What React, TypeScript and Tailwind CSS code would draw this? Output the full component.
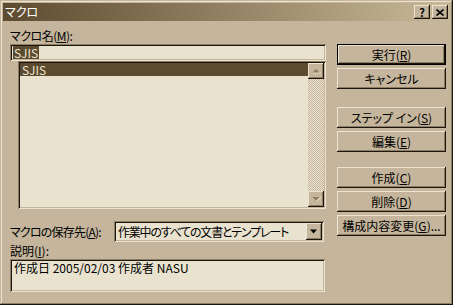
import React from 'react';

const RAISED =
  'shadow-[inset_-1px_-1px_#1c150c,inset_1px_1px_#ebe4d1,inset_-2px_-2px_#8c7d64,inset_2px_2px_#c4b59c]';
const SUNKEN =
  'shadow-[inset_1px_1px_#8c7d64,inset_-1px_-1px_#ebe4d1,inset_2px_2px_#1c150c,inset_-2px_-2px_#c4b59c]';

function Key({ k }: { k: string }) {
  return <span className="underline underline-offset-[1px]">{k}</span>;
}

function Button({ children, primary }: { children: React.ReactNode; primary?: boolean }) {
  return (
    <div
      className={`w-[109px] h-[21px] flex items-center justify-center bg-[#c4b59c] text-black ${
        primary ? 'border border-black' : ''
      } ${RAISED}`}
    >
      <span className="leading-[14px] whitespace-nowrap">{children}</span>
    </div>
  );
}

function ArrowBtn({ dir }: { dir: 'up' | 'down' }) {
  return (
    <div className={`w-[16px] h-[16px] flex items-center justify-center bg-[#c4b59c] ${RAISED}`}>
      <svg width="9" height="6" viewBox="0 0 9 6">
        <path d={dir === 'up' ? 'M1 5h8' : 'M5 5l4-4'} stroke="#ebe4d1" strokeWidth="1" fill="none" />
        <path d={dir === 'up' ? 'M4 1L7.5 4.5H0.5Z' : 'M0.5 1H7.5L4 4.5Z'} fill="#8c7d64" />
      </svg>
    </div>
  );
}

export default function App() {
  return (
    <div className="w-[453px] h-[305px] bg-[#c4b59c] shadow-[inset_-1px_-1px_#1c150c,inset_1px_1px_#c4b59c,inset_-2px_-2px_#8c7d64,inset_2px_2px_#ebe4d1] p-[3px] text-[12px] text-black font-['Noto_Sans_CJK_JP','Noto_Sans',sans-serif] [font-feature-settings:'palt'] overflow-hidden">
      {/* title bar */}
      <div className="h-[18px] flex items-center justify-between pl-[2px] pr-[2px] bg-[linear-gradient(to_right,#5c4b2e,#c8b998)]">
        <span className="text-white leading-[14px]">マクロ</span>
        <div className="flex gap-[2px]">
          <div className={`w-[16px] h-[14px] flex items-center justify-center bg-[#c4b59c] ${RAISED}`}>
            <span className="text-[11px] font-bold leading-[11px]">?</span>
          </div>
          <div className={`w-[16px] h-[14px] flex items-center justify-center bg-[#c4b59c] ${RAISED}`}>
            <svg width="8" height="7" viewBox="0 0 8 7">
              <path d="M0.5 0.5L7.5 6.5M7.5 0.5L0.5 6.5" stroke="#000" strokeWidth="1.6" />
            </svg>
          </div>
        </div>
      </div>

      <div className="flex pl-[7px] pt-[7px]">
        {/* left column */}
        <div className="w-[316px] flex flex-col">
          <div className="h-[16px] leading-[16px] tracking-[-0.5px]">
            マクロ名(<Key k="M" />):
          </div>
          <div className={`h-[17px] bg-[#e9e2cf] flex items-center pl-[3px] ${SUNKEN}`}>
            <span className="bg-[#5c4b2e] text-[#ebe4d1] h-[13px] leading-[13px] px-[1px]">SJIS</span>
          </div>
          <div className={`ml-[8px] h-[148px] bg-[#e9e2cf] p-[2px] flex ${SUNKEN}`}>
            <div className="flex-1">
              <div className="h-[13px] leading-[13px] bg-[#5c4b2e] text-[#ebe4d1] pl-[2px]">SJIS</div>
            </div>
            <div className="w-[16px] flex flex-col">
              <ArrowBtn dir="up" />
              <div className="flex-1 bg-[image:repeating-conic-gradient(#c4b59c_0%_25%,#ebe4d1_0%_50%)] bg-[length:2px_2px]" />
              <ArrowBtn dir="down" />
            </div>
          </div>

          <div className="mt-[12px] flex items-center">
            <div className="w-[104px] leading-[14px] whitespace-nowrap tracking-[-0.8px]">
              マクロの保存先(<Key k="A" />):
            </div>
            <div className={`w-[210px] h-[21px] bg-[#e9e2cf] flex items-center p-[2px] ${SUNKEN}`}>
              <span className="flex-1 pl-[2px] leading-[14px] whitespace-nowrap tracking-[-1.2px]">
                作業中のすべての文書とテンプレート
              </span>
              <div className={`w-[16px] h-[17px] flex items-center justify-center bg-[#c4b59c] ${RAISED}`}>
                <svg width="8" height="5" viewBox="0 0 8 5">
                  <path d="M0 0.5H7L3.5 4.5Z" fill="#000" />
                </svg>
              </div>
            </div>
          </div>

          <div className="mt-[1px] h-[16px] leading-[16px]">
            説明(<Key k="I" />):
          </div>
          <div className={`w-[315px] h-[33px] bg-[#e9e2cf] pl-[4px] pt-[2px] leading-[14px] ${SUNKEN}`}>
            作成日 2005/02/03 作成者 NASU
          </div>
        </div>

        {/* right column */}
        <div className="ml-[11px] pt-[16px] flex flex-col gap-[3px]">
          <Button primary>
            実行(<Key k="R" />)
          </Button>
          <Button>キャンセル</Button>
          <div className="h-[12px]" />
          <Button>
            ステップ イン(<Key k="S" />)
          </Button>
          <Button>
            編集(<Key k="E" />)
          </Button>
          <div className="h-[9px]" />
          <Button>
            作成(<Key k="C" />)
          </Button>
          <Button>
            削除(<Key k="D" />)
          </Button>
          <Button>
            構成内容変更(<Key k="G" />)...
          </Button>
        </div>
      </div>
    </div>
  );
}
